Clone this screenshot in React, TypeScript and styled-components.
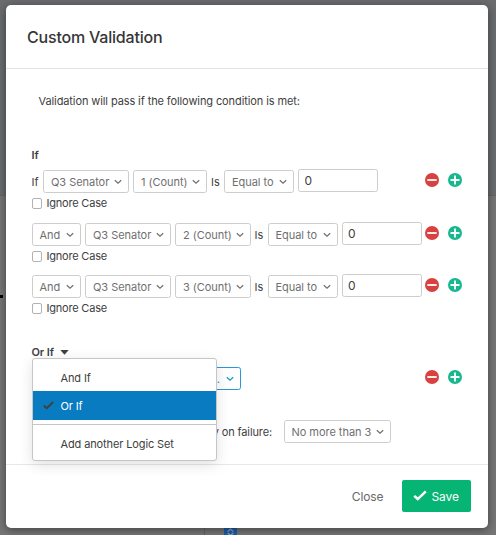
import React from "react";
import styled, { createGlobalStyle, css } from "styled-components";

const Global = createGlobalStyle`
  *, *::before, *::after { box-sizing: border-box; }
  html, body { margin: 0; height: 100%; overflow: hidden; }
  body { background: #747474; font-family: Inter, "Liberation Sans", sans-serif; color: #404041; font-size: 11px; }
  button, input { font: inherit; color: inherit; }
`;

const Page = styled.div`
  position: relative;
  height: 535px;
  width: 496px;
  padding: 5px 8.5px 7.5px 5.5px;
  background: linear-gradient(#6b6c6e 0 195px, #656565 195px 196px, #767676 196px);
  overflow: hidden;
`;

const ColumnRule = styled.div`
  position: absolute;
  left: 204px;
  top: 520px;
  width: 1px;
  height: 15px;
  background: #646464;
`;

const PageMark = styled.div`
  position: absolute;
  left: 0;
  top: 295px;
  width: 3px;
  height: 3px;
  background: #000;
`;

const Handle = styled.div`
  position: absolute;
  left: 224px;
  top: 520px;
  width: 13px;
  height: 15px;
  padding-top: 8px;
  background: #1f5ea8;
  svg { display: block; margin: 0 auto; }
`;

const Dialog = styled.section`
  position: relative;
  display: flex;
  flex-direction: column;
  height: 100%;
  background: #fff;
  border-radius: 5px;
  box-shadow: 0 2px 10px rgba(0, 0, 0, 0.45);
`;

const Header = styled.header`
  height: 64px;
  flex: none;
  padding: 0 22px 0 21.5px;
  display: flex;
  align-items: center;
  border-bottom: 1px solid #e4e4e4;
`;

const Title = styled.h1`
  margin: 1px 0 0;
  font-size: 16px;
  line-height: 20px;
  font-weight: 500;
  letter-spacing: -0.2px;
  color: #363637;
`;

const Body = styled.div`
  height: 394.5px;
  flex: none;
  padding: 24px 26px 0 26px;
`;

const Intro = styled.p`
  margin: 0 0 0 7px;
  line-height: 16px;
  letter-spacing: -0.1px;
`;

const SetTitle = styled.h2`
  margin: 0;
  height: 16px;
  line-height: 16px;
  font-size: 11px;
  font-weight: 600;
  letter-spacing: -0.1px;
  display: flex;
  align-items: center;
  gap: 6px;
`;

const FirstTitle = styled(SetTitle)`
  margin-top: 38px;
`;

const Conditions = styled.div`
  display: grid;
  grid-template-rows: 53px 52px 53px;
  margin-top: 7px;
`;

const Condition = styled.div``;

const Row = styled.div`
  display: flex;
  align-items: center;
  height: 23px;
`;

const Word = styled.span<{ $w: number }>`
  flex: none;
  width: ${(p) => p.$w}px;
  padding-top: 1px;
  line-height: 16px;
  white-space: nowrap;
`;

const FailureLabel = styled(Word)`
  padding: 0 11.5px 0 0;
  text-align: right;
  letter-spacing: -0.12px;
`;

const Select = styled.button<{ $w: number; $accent?: boolean }>`
  flex: none;
  width: ${(p) => p.$w}px;
  height: 23px;
  margin: 0 4px 0 0;
  padding: 1px 6px 0 7px;
  display: flex;
  align-items: center;
  justify-content: space-between;
  border: 1px solid #cdcdcd;
  border-radius: 2.5px;
  background: #fff;
  color: #6f6f70;
  letter-spacing: -0.04px;
  white-space: nowrap;
  ${(p) =>
    p.$accent &&
    css`
      color: #1a8fd6;
      border-color: #2a97db;
      justify-content: flex-end;
      gap: 6px;
    `}
`;

const Input = styled.input`
  flex: none;
  width: 80px;
  height: 23px;
  margin-top: -2px;
  padding: 0 5.5px;
  border: 1px solid #cdcdcd;
  border-radius: 2.5px;
  outline: none;
  background: #fff;
  font-size: 12px;
`;

const Actions = styled.div`
  display: flex;
  gap: 8.5px;
  margin: -3px 0 0 auto;
  svg { display: block; }
`;

const CheckLine = styled.label`
  display: flex;
  align-items: center;
  gap: 4.5px;
  height: 16px;
  margin-top: 2px;
  letter-spacing: -0.2px;
`;

const Box = styled.span`
  width: 10.5px;
  height: 11px;
  border: 1px solid #b2b2b2;
  border-radius: 2px;
`;

const MenuAnchor = styled.div`
  position: relative;
  margin-top: 16px;
`;

const Menu = styled.div`
  position: absolute;
  z-index: 2;
  left: 0;
  top: 14px;
  width: 185.5px;
  height: 103px;
  border: 1px solid #c6c6c6;
  border-radius: 3px;
  background: #fff;
  box-shadow: 0 4px 14px rgba(0, 0, 0, 0.12);
`;

const MenuItem = styled.div<{ $active?: boolean; $h: number; $top?: number }>`
  display: flex;
  align-items: center;
  height: ${(p) => p.$h}px;
  padding-top: ${(p) => p.$top ?? 0}px;
  color: ${(p) => (p.$active ? "#fff" : "#404041")};
  background: ${(p) => (p.$active ? "#087bc1" : "transparent")};
  letter-spacing: -0.12px;
`;

const Gutter = styled.span`
  flex: none;
  width: 28px;
  padding-left: 10px;
  display: flex;
`;

const Divider = styled.div`
  height: 1px;
  margin-top: 4px;
  background: #c6c6c6;
`;

const OtherRow = styled(Row)`
  margin-top: 7px;
`;

const FailureRow = styled(Row)`
  margin-top: 30px;
`;

const Footer = styled.footer`
  flex: 1;
  border-top: 1px solid #e8e8e8;
  display: flex;
  align-items: center;
  justify-content: flex-end;
  padding: 0 16.5px 0 0;
  font-size: 12px;
`;

const CloseButton = styled.button`
  border: 0;
  background: none;
  padding: 0;
  margin-right: 18px;
  color: #686869;
  letter-spacing: -0.1px;
`;

const SaveButton = styled.button`
  width: 69.5px;
  height: 31.5px;
  border: 0;
  border-radius: 2px;
  background: #06b574;
  color: #fff;
  display: flex;
  align-items: center;
  padding: 0 0 0 11px;
  gap: 5px;
  letter-spacing: -0.1px;
`;

const Chevron = () => (
  <svg width="8" height="6" viewBox="0 0 8 6" fill="none" stroke="currentColor" strokeWidth="1.2">
    <path d="M.8 1.3 4 4.3 7.2 1.3" />
  </svg>
);

const Tick = ({ size, color }: { size: number; color: string }) => (
  <svg width={size} height={size * 0.8} viewBox="0 0 14 11" fill="none" stroke={color} strokeWidth="2.6">
    <path d="M1.2 5.8 4.8 9 12.8 1.3" />
  </svg>
);

const RowActions = () => (
  <Actions>
    <svg width="14" height="14" viewBox="0 0 14 14">
      <circle cx="7" cy="7" r="7" fill="#d9413f" />
      <path d="M2.3 7H11.7" stroke="#fff" strokeWidth="1.8" />
    </svg>
    <svg width="14" height="14" viewBox="0 0 14 14">
      <circle cx="7" cy="7" r="7" fill="#17b890" />
      <path d="M2.5 7H11.5M7 2.5V11.5" stroke="#fff" strokeWidth="1.8" />
    </svg>
  </Actions>
);

const Picker = ({ label, w }: { label: string; w: number }) => (
  <Select $w={w}>
    {label}
    <Chevron />
  </Select>
);

const rows = [
  { join: "If", count: "1 (Count)", w: 74 },
  { join: "And", count: "2 (Count)", w: 75.5 },
  { join: "And", count: "3 (Count)", w: 75.5 },
];

export default function App() {
  return (
    <>
      <Global />
      <Page>
        <PageMark />
        <ColumnRule />
        <Handle>
          <svg width="7" height="8" viewBox="0 0 7 8" fill="none" stroke="#8fa6bd" strokeWidth="1.3">
            <path d="M.7 3.5 3.5 1 6.3 3.5M.7 5 3.5 7.5 6.3 5" />
          </svg>
        </Handle>
        <Dialog>
          <Header>
            <Title>Custom Validation</Title>
          </Header>
          <Body>
            <Intro>Validation will pass if the following condition is met:</Intro>
            <FirstTitle>If</FirstTitle>
            <Conditions>
              {rows.map((r) => (
                <Condition key={r.count}>
                  <Row>
                    {r.join === "If" ? <Word $w={11.5}>If</Word> : <Picker label={r.join} w={49.5} />}
                    <Picker label="Q3 Senator" w={86} />
                    <Picker label={r.count} w={r.w} />
                    <Word $w={13}>Is</Word>
                    <Picker label="Equal to" w={70} />
                    <Input defaultValue="0" />
                    <RowActions />
                  </Row>
                  <CheckLine>
                    <Box />
                    Ignore Case
                  </CheckLine>
                </Condition>
              ))}
            </Conditions>
            <MenuAnchor>
              <SetTitle>
                Or If
                <svg width="9" height="5" viewBox="0 0 9 5">
                  <path d="M.3 0H8.7L4.5 4.8Z" fill="#404041" />
                </svg>
              </SetTitle>
              <Menu>
                <MenuItem $h={32} $top={5}>
                  <Gutter />
                  And If
                </MenuItem>
                <MenuItem $h={28.5} $top={1} $active>
                  <Gutter>
                    <Tick size={11} color="#404041" />
                  </Gutter>
                  Or If
                </MenuItem>
                <Divider />
                <MenuItem $h={36} $top={2}>
                  <Gutter />
                  Add another Logic Set
                </MenuItem>
              </Menu>
            </MenuAnchor>
            <OtherRow>
              <Word $w={11.5}>If</Word>
              <Select $w={198} $accent>
                Select...
                <Chevron />
              </Select>
              <RowActions />
            </OtherRow>
            <FailureRow>
              <FailureLabel $w={252}>Display on failure:</FailureLabel>
              <Picker label="No more than 3" w={107} />
            </FailureRow>
          </Body>
          <Footer>
            <CloseButton>Close</CloseButton>
            <SaveButton>
              <Tick size={14} color="#fff" />
              Save
            </SaveButton>
          </Footer>
        </Dialog>
      </Page>
    </>
  );
}
